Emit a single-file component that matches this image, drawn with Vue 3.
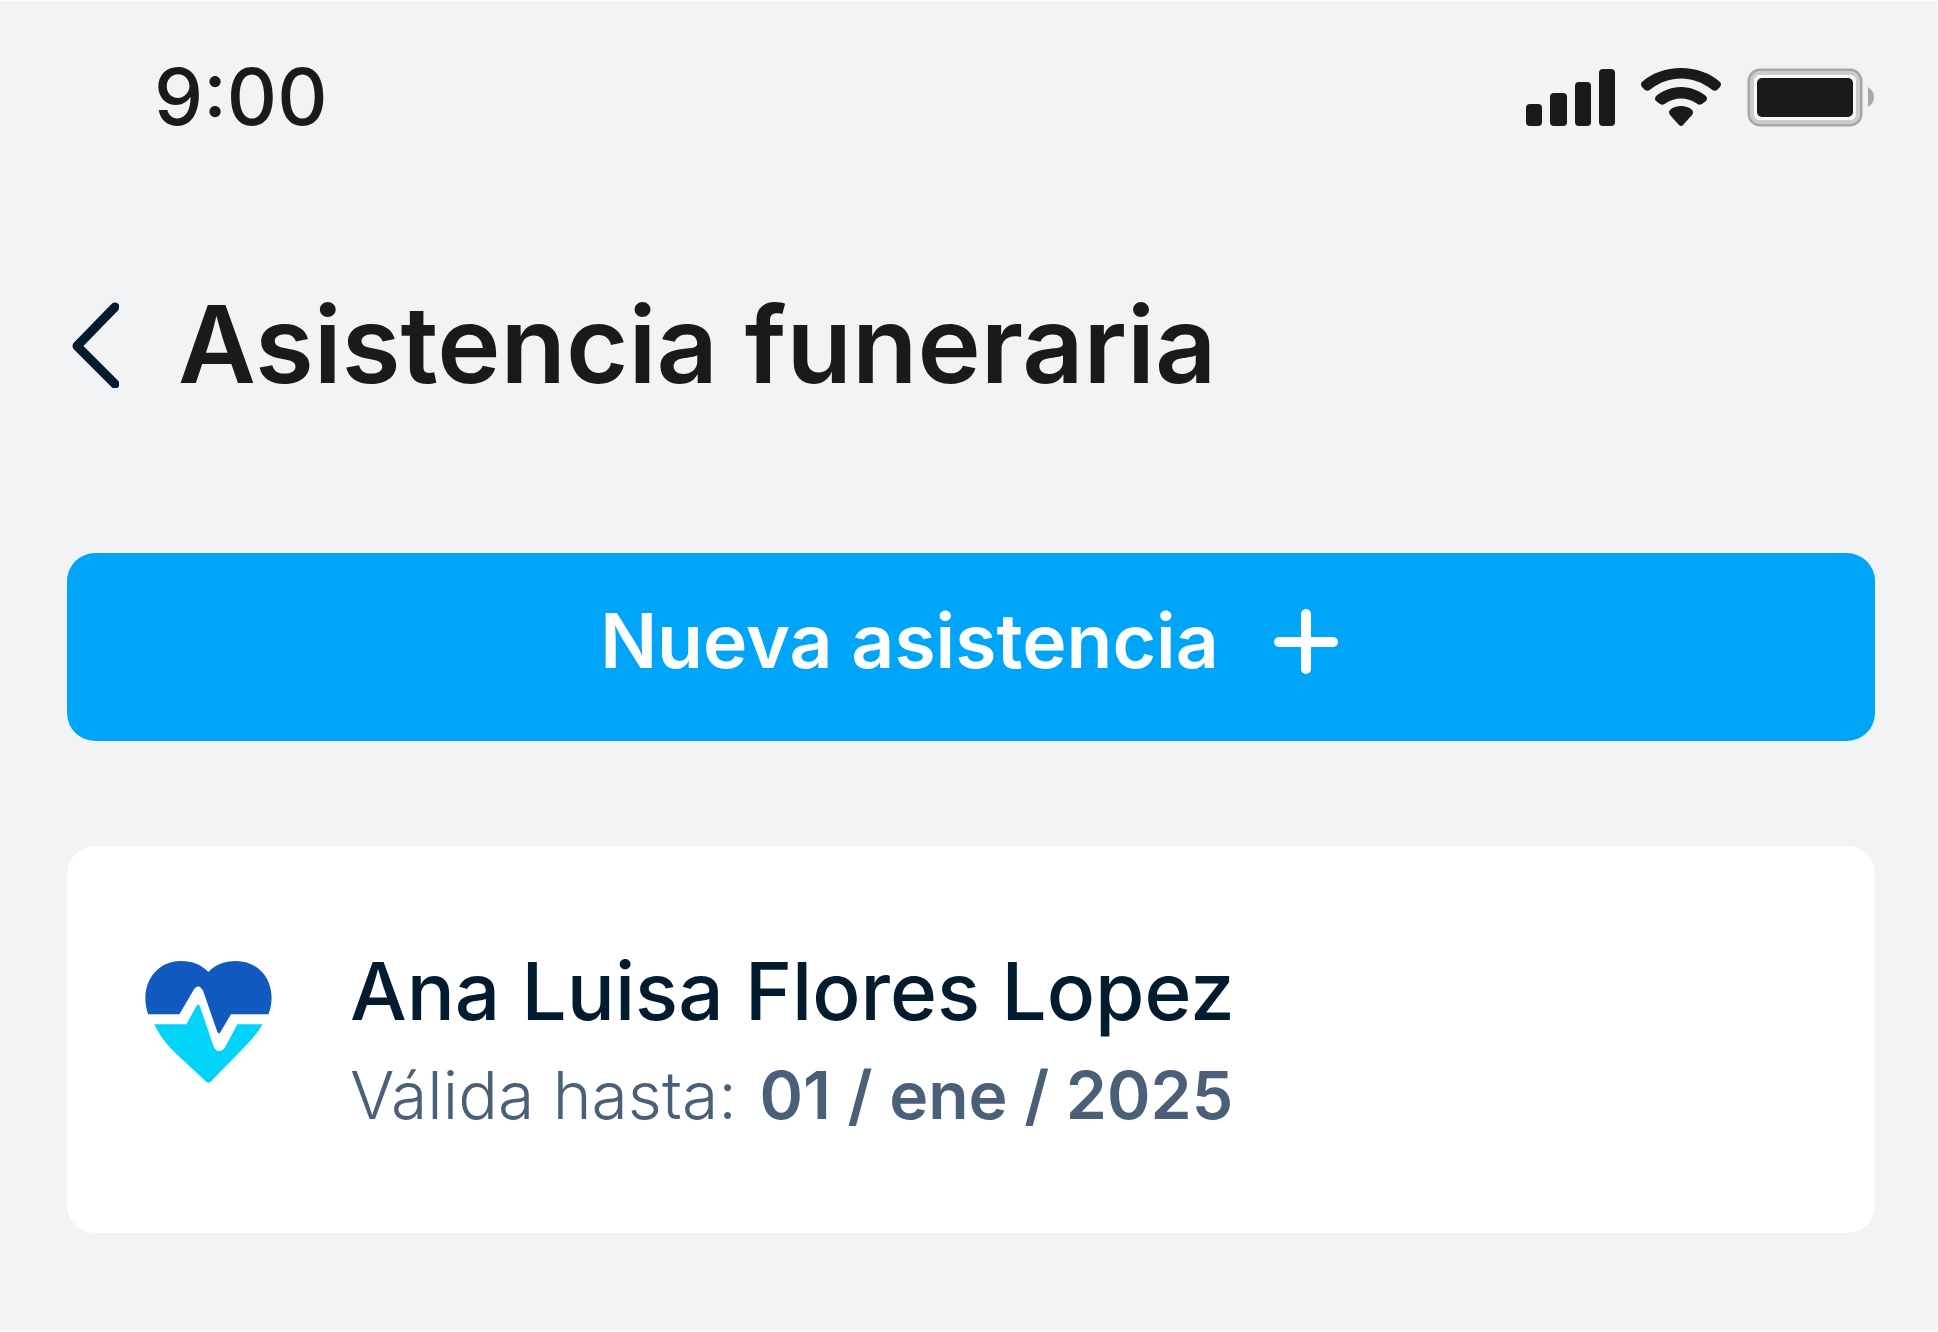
<script setup>
const time = '9:00'
const title = 'Asistencia funeraria'
const plans = [
  { name: 'Ana Luisa Flores Lopez', label: 'Válida hasta:', date: '01 / ene / 2025' },
]
</script>

<template>
  <div class="screen">
    <div class="status">
      <time class="clock">{{ time }}</time>
      <div class="indicators">
        <svg width="90" height="59" viewBox="0 0 90 59" fill="#1a1a1a" aria-hidden="true">
          <rect x="0" y="36" width="16" height="22" rx="4" />
          <rect x="24" y="25" width="17" height="33" rx="4" />
          <rect x="49" y="14" width="16" height="44" rx="4" />
          <rect x="73" y="1" width="16" height="57" rx="4" />
        </svg>
        <svg width="80" height="59" viewBox="0 0 80 59" fill="#1a1a1a" aria-hidden="true">
          <path d="M40 0C55 0 69 5 79 14Q81 16 79 19L76 22Q73 24 70 21C52 7 28 7 10 21Q7 24 4 22L1 19Q-1 16 1 14C11 5 25 0 40 0Z" />
          <path d="M40 19C50 19 59 23 65 28Q67 31 65 33L61 36Q58 38 55 35C46 29 34 29 25 35Q22 38 19 36L15 33Q13 31 15 28C21 23 30 19 40 19Z" />
          <path d="M40 38C44 38 48 39 51 42Q53 44 51 47L42 57Q40 59 38 57L29 47Q27 44 29 42C32 39 36 38 40 38Z" />
        </svg>
        <svg width="129" height="59" viewBox="0 0 129 59" aria-hidden="true">
          <rect x="3" y="2" width="112" height="55" rx="11" fill="none" stroke="#a6a7a8" stroke-width="3" />
          <rect x="6" y="5" width="106" height="49" rx="8" fill="none" stroke="#cbccce" stroke-width="4" />
          <rect x="8" y="7" width="102" height="45" rx="6" fill="#f7f8f9" />
          <rect x="11" y="10" width="96" height="39" rx="5" fill="#1a1a1a" />
          <path d="M122 19Q128 23 128 29T122 39Z" fill="#a6a7a8" />
        </svg>
      </div>
    </div>

    <header class="header">
      <button class="back" type="button" aria-label="Volver">
        <svg width="48" height="88" viewBox="0 0 48 88" aria-hidden="true">
          <path d="M44 7L6 46L44 84" fill="none" stroke="#001c2e" stroke-width="9" stroke-linecap="round" stroke-linejoin="round" />
        </svg>
      </button>
      <h1 class="title">{{ title }}</h1>
    </header>

    <main>
      <button class="add" type="button">
        <span>Nueva asistencia</span>
        <svg width="64" height="66" viewBox="0 0 64 66" aria-hidden="true">
          <path d="M32 6V61M5 34H59" fill="none" stroke="#fff" stroke-width="10" stroke-linecap="round" />
        </svg>
      </button>

      <article v-for="plan in plans" :key="plan.name" class="card">
        <svg class="heart" width="129" height="122" viewBox="72 92 387 367" aria-hidden="true">
          <path fill="#0f59bf" d="M84 252C56 174 100 92 183 92C216 92 245 103 265 125C285 103 315 92 348 92C430 92 476 172 446 252H333L302 305Q297 315 292 305L250 184Q235 154 218 184L178 252Z" />
          <path fill="#02d3f8" d="M102 282H199L228 230Q235 216 240 230L282 352Q297 374 315 352L352 282H428C412 312 384 342 352 373L277 450Q265 466 253 450L165 368C140 342 116 313 102 282Z" />
        </svg>
        <div>
          <h2 class="name">{{ plan.name }}</h2>
          <p class="valid">{{ plan.label }} <strong>{{ plan.date }}</strong></p>
        </div>
      </article>
    </main>
  </div>
</template>

<style>
body {
  margin: 0;
  background: #f1f3f5;
}
</style>

<style scoped>
.screen {
  box-sizing: border-box;
  min-height: 100vh;
  padding: 66px 62px 97px 67px;
  background: #f1f3f5;
  border: 1px solid #fafbfb;
  border-left: 0;
  color: #1a1a1a;
  font-family: Inter, sans-serif;
}

.status {
  display: flex;
  align-items: center;
  justify-content: space-between;
  padding-left: 87px;
}

.clock {
  font-size: 78px;
  font-weight: 500;
  line-height: 60px;
}

.indicators {
  display: flex;
  gap: 25px;
}

.header {
  display: flex;
  align-items: center;
  gap: 59px;
  margin-top: 147px;
  padding-left: 4px;
}

.back {
  display: flex;
  padding: 0;
  border: 0;
  background: none;
}

.title {
  margin: 0;
  font-size: 107px;
  font-weight: 600;
  line-height: 140px;
}

.add {
  display: flex;
  align-items: center;
  justify-content: center;
  gap: 55px;
  width: 100%;
  margin-top: 139px;
  padding: 38px 4px 50px 0;
  border: 0;
  border-radius: 28px;
  background: #00a5f8;
  color: #fff;
  font: 600 75px/100px Inter, sans-serif;
}

.card {
  display: flex;
  align-items: flex-start;
  gap: 77px;
  margin-top: 105px;
  padding: 95px 77px 92px;
  border-radius: 28px;
  background: #fff;
}

.heart {
  flex: none;
  margin-top: 20px;
}

.name {
  margin: 0;
  color: #001c2e;
  font-size: 80px;
  font-weight: 500;
  line-height: 100px;
}

.valid {
  margin: 8px 0 0;
  color: #4a6079;
  font-size: 66px;
  font-weight: 300;
  line-height: 92px;
}

.valid strong {
  margin-left: 4px;
  font-weight: 600;
}
</style>
